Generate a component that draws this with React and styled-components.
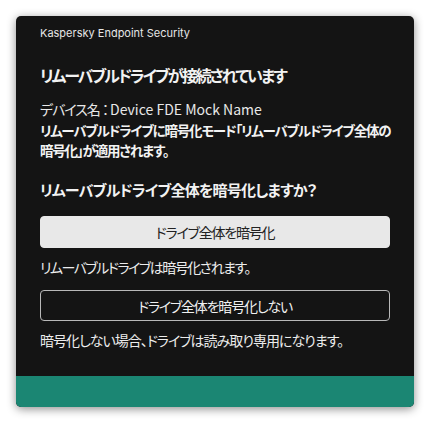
import React from "react";
import styled, { createGlobalStyle } from "styled-components";

const GlobalStyle = createGlobalStyle`
  html, body {
    margin: 0;
    padding: 0;
    background: #ffffff;
  }
  body {
    font-family: "Inter", "Noto Sans CJK JP", sans-serif;
  }
  * {
    box-sizing: border-box;
  }
`;

const Page = styled.div`
  width: 430px;
  height: 424px;
  padding: 16px 16px 0;
`;

const Window = styled.div`
  width: 398px;
  height: 391px;
  display: flex;
  flex-flow: column;
  background: #141414;
  border-radius: 5px;
  box-shadow: 0 2px 10px rgba(0, 0, 0, 0.45);
  overflow: hidden;
  color: #f2f2f2;
`;

const TitleBar = styled.div`
  height: 34px;
  padding: 10px 24px 0;
  font-size: 11px;
  line-height: 14px;
  color: #e6e6e6;
`;

const Content = styled.div`
  flex: 1;
  padding: 14px 24px 0;
  display: flex;
  flex-flow: column;
  font-family: "Noto Sans CJK JP", sans-serif;
  font-feature-settings: "palt";
  letter-spacing: -1px;
`;

const Heading = styled.h1`
  margin: 0;
  font-size: 16px;
  line-height: 22px;
  font-weight: 700;
  letter-spacing: -2px;
`;

const DeviceName = styled.p`
  margin: 14px 0 0;
  font-size: 14px;
  line-height: 18px;
  font-weight: 400;
  color: #e8e8e8;
  span {
    font-feature-settings: normal;
    letter-spacing: 0;
  }
`;

const Notice = styled.p`
  margin: 3px 0 0;
  font-size: 13.5px;
  line-height: 19.5px;
  font-weight: 700;
  letter-spacing: -1.2px;
  white-space: nowrap;
`;

const Question = styled.h2`
  margin: 20px 0 0;
  font-size: 15px;
  line-height: 20px;
  font-weight: 700;
  letter-spacing: -0.8px;
`;

const Button = styled.button`
  width: 100%;
  height: ${(p) => (p.$primary ? "32px" : "31px")};
  margin-top: ${(p) => (p.$primary ? "16px" : "14px")};
  display: flex;
  align-items: center;
  justify-content: center;
  border-radius: 4px;
  font-family: "Noto Sans CJK JP", sans-serif;
  font-feature-settings: "palt";
  letter-spacing: -1.2px;
  font-size: 14px;
  color: ${(p) => (p.$primary ? "#222222" : "#f0f0f0")};
  background: ${(p) => (p.$primary ? "#e8e8e8" : "transparent")};
  border: 1px solid ${(p) => (p.$primary ? "#e8e8e8" : "#b8b8b8")};
  cursor: pointer;
`;

const Hint = styled.p`
  margin: 10px 0 0;
  font-size: 14px;
  line-height: 18px;
  color: #ececec;
  letter-spacing: ${(p) => p.$tight || "-1px"};
`;

const Footer = styled.div`
  height: 31px;
  background: #1b8673;
`;

export default function App() {
  return (
    <Page>
      <GlobalStyle />
      <Window>
        <TitleBar>Kaspersky Endpoint Security</TitleBar>
        <Content>
          <Heading>リムーバブルドライブが接続されています</Heading>
          <DeviceName>
            デバイス名 ： <span>Device FDE Mock Name</span>
          </DeviceName>
          <Notice>
            リムーバブルドライブに暗号化モード「リムーバブルドライブ全体の
            <br />
            暗号化」が適用されます。
          </Notice>
          <Question>リムーバブルドライブ全体を暗号化しますか？</Question>
          <Button $primary>ドライブ全体を暗号化</Button>
          <Hint $tight="-1.5px">リムーバブルドライブは暗号化されます。</Hint>
          <Button>ドライブ全体を暗号化しない</Button>
          <Hint>暗号化しない場合、ドライブは読み取り専用になります。</Hint>
        </Content>
        <Footer />
      </Window>
    </Page>
  );
}
